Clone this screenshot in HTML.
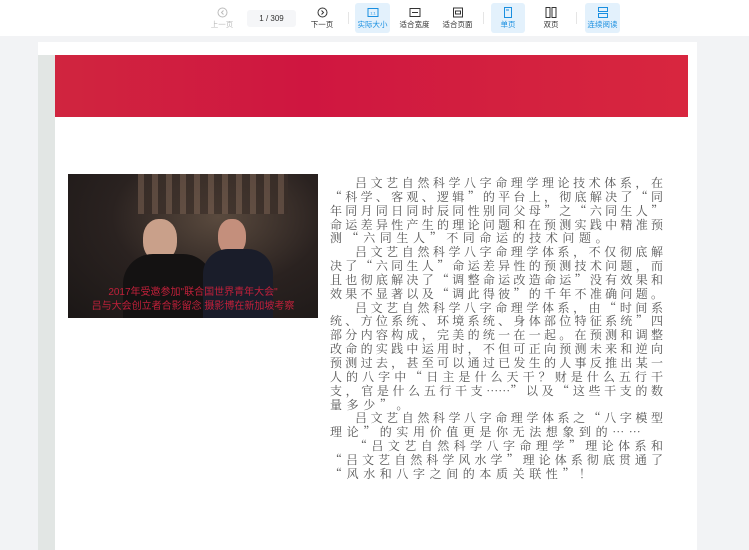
<!DOCTYPE html>
<html><head><meta charset="utf-8"><style>
*{margin:0;padding:0;box-sizing:border-box}
body{width:749px;height:550px;background:#f2f3f5;font-family:"Liberation Sans","Noto Sans CJK SC",sans-serif;position:relative;overflow:hidden}
.tb{position:absolute;left:0;top:0;width:749px;height:36px;background:#fff}
.it{position:absolute;top:3px;height:30px;text-align:center;font-size:7.5px;color:#333}
.it.on{background:#e3f1fc;color:#1a8fe0;border-radius:3px}
.it svg{display:block;margin:4px auto 1px}
.page{position:absolute;left:38px;top:42px;width:659px;height:508px;background:#fff}
.strip{position:absolute;left:38px;top:55px;width:17px;height:495px;background:#e2e6e4}
.red{position:absolute;left:55px;top:55px;width:633px;height:62px;background:linear-gradient(90deg,#d0253f,#cf1640 40%,#d3203f 70%,#d8263f)}
.photo{position:absolute;left:68px;top:174px;width:250px;height:144px;background:radial-gradient(ellipse at 60% 30%,#5a4a3e,#2a2220 50%,#1b1716);overflow:hidden}
.txt{position:absolute;left:330px;top:176px;width:333px;font-family:"Noto Serif CJK SC","Liberation Serif",serif;font-size:12px;color:#555;line-height:13.85px}
.l{text-align:justify;text-align-last:justify;white-space:nowrap;height:13.85px;overflow:visible}
.l.s{text-align-last:left;letter-spacing:4.6px}
.i{padding-left:25px}
</style></head><body>
<div class="tb">
 <div class="it" style="left:205px;width:34px;color:#bbb"><svg width="11" height="11"><circle cx="5.5" cy="5.5" r="4.5" fill="none" stroke="#bbb"/><path d="M6.5 3.5L4.5 5.5 6.5 7.5" fill="none" stroke="#bbb"/></svg>上一页</div>
 <div style="position:absolute;left:247px;top:10px;width:49px;height:17px;background:#f5f6f8;border-radius:3px;font-size:8px;color:#333;line-height:17px;text-align:center">1 / 309</div>
 <div class="it" style="left:305px;width:34px"><svg width="11" height="11"><circle cx="5.5" cy="5.5" r="4.5" fill="none" stroke="#333"/><path d="M4.5 3.5L6.5 5.5 4.5 7.5" fill="none" stroke="#333"/></svg>下一页</div>
 <div style="position:absolute;left:348px;top:12px;width:1px;height:12px;background:#e5e5e5"></div>
 <div class="it on" style="left:355px;width:35px"><svg width="12" height="11"><rect x="1" y="1.5" width="10" height="8" fill="none" stroke="#1a8fe0"/><text x="6" y="7.5" font-size="4" text-anchor="middle" fill="#1a8fe0">1:1</text></svg>实际大小</div>
 <div class="it" style="left:397px;width:35px"><svg width="12" height="11"><rect x="1" y="1.5" width="10" height="8" fill="none" stroke="#333"/><path d="M3 5.5h6" stroke="#333"/></svg>适合宽度</div>
 <div class="it" style="left:440px;width:35px"><svg width="12" height="11"><rect x="1.5" y="1" width="9" height="9" fill="none" stroke="#333"/><rect x="3.5" y="4" width="5" height="3" fill="none" stroke="#333"/></svg>适合页面</div>
 <div style="position:absolute;left:483px;top:12px;width:1px;height:12px;background:#e5e5e5"></div>
 <div class="it on" style="left:491px;width:34px"><svg width="12" height="11"><rect x="2.5" y="0.5" width="7" height="10" fill="none" stroke="#1a8fe0"/><path d="M4 3h3" stroke="#1a8fe0"/></svg>单页</div>
 <div class="it" style="left:534px;width:34px"><svg width="12" height="11"><rect x="1" y="0.5" width="4" height="10" fill="none" stroke="#333"/><rect x="7" y="0.5" width="4" height="10" fill="none" stroke="#333"/></svg>双页</div>
 <div style="position:absolute;left:576px;top:12px;width:1px;height:12px;background:#e5e5e5"></div>
 <div class="it on" style="left:585px;width:35px"><svg width="12" height="11"><rect x="1.5" y="0.5" width="9" height="4" fill="none" stroke="#1a8fe0"/><rect x="1.5" y="6.5" width="9" height="4" fill="none" stroke="#1a8fe0"/></svg>连续阅读</div>
</div>
<div class="page"></div>
<div class="strip"></div>
<div class="red"></div>
<div class="photo">
 <div style="position:absolute;left:70px;top:0;width:150px;height:40px;background:repeating-linear-gradient(90deg,#6b5548 0 6px,#3a2e28 6px 14px);opacity:.7"></div>
 <div style="position:absolute;left:75px;top:45px;width:34px;height:42px;border-radius:45%;background:#c9a08a"></div>
 <div style="position:absolute;left:55px;top:80px;width:90px;height:64px;border-radius:30px 30px 0 0;background:#141212"></div>
 <div style="position:absolute;left:150px;top:45px;width:28px;height:36px;border-radius:45%;background:#c48f7c"></div>
 <div style="position:absolute;left:135px;top:75px;width:70px;height:69px;border-radius:25px 25px 0 0;background:#1a1d2a"></div>
 <div style="position:absolute;left:0;top:112px;width:250px;text-align:center;color:#c0203a;font-size:10px;line-height:14px;white-space:nowrap">2017年受邀参加"联合国世界青年大会"<br>吕与大会创立者合影留念 摄影博在新加坡考察</div>
</div>
<div class="txt">
<div class="l i">吕文艺自然科学八字命理学理论技术体系，在</div>
<div class="l">“科学、客观、逻辑”的平台上，彻底解决了“同</div>
<div class="l">年同月同日同时辰同性别同父母”之“六同生人”</div>
<div class="l">命运差异性产生的理论问题和在预测实践中精准预</div>
<div class="l s">测“六同生人”不同命运的技术问题。</div>
<div class="l i">吕文艺自然科学八字命理学体系，不仅彻底解</div>
<div class="l">决了“六同生人”命运差异性的预测技术问题，而</div>
<div class="l">且也彻底解决了“调整命运改造命运”没有效果和</div>
<div class="l">效果不显著以及“调此得彼”的千年不准确问题。</div>
<div class="l i">吕文艺自然科学八字命理学体系，由“时间系</div>
<div class="l">统、方位系统、环境系统、身体部位特征系统”四</div>
<div class="l">部分内容构成，完美的统一在一起。在预测和调整</div>
<div class="l">改命的实践中运用时，不但可正向预测未来和逆向</div>
<div class="l">预测过去，甚至可以通过已发生的人事反推出某一</div>
<div class="l">人的八字中“日主是什么天干？财是什么五行干</div>
<div class="l">支，官是什么五行干支……”以及“这些干支的数</div>
<div class="l s">量多少”。</div>
<div class="l i">吕文艺自然科学八字命理学体系之“八字模型</div>
<div class="l s">理论”的实用价值更是你无法想象到的……</div>
<div class="l i">“吕文艺自然科学八字命理学”理论体系和</div>
<div class="l">“吕文艺自然科学风水学”理论体系彻底贯通了</div>
<div class="l s">“风水和八字之间的本质关联性”！</div>
</div>
</body></html>
